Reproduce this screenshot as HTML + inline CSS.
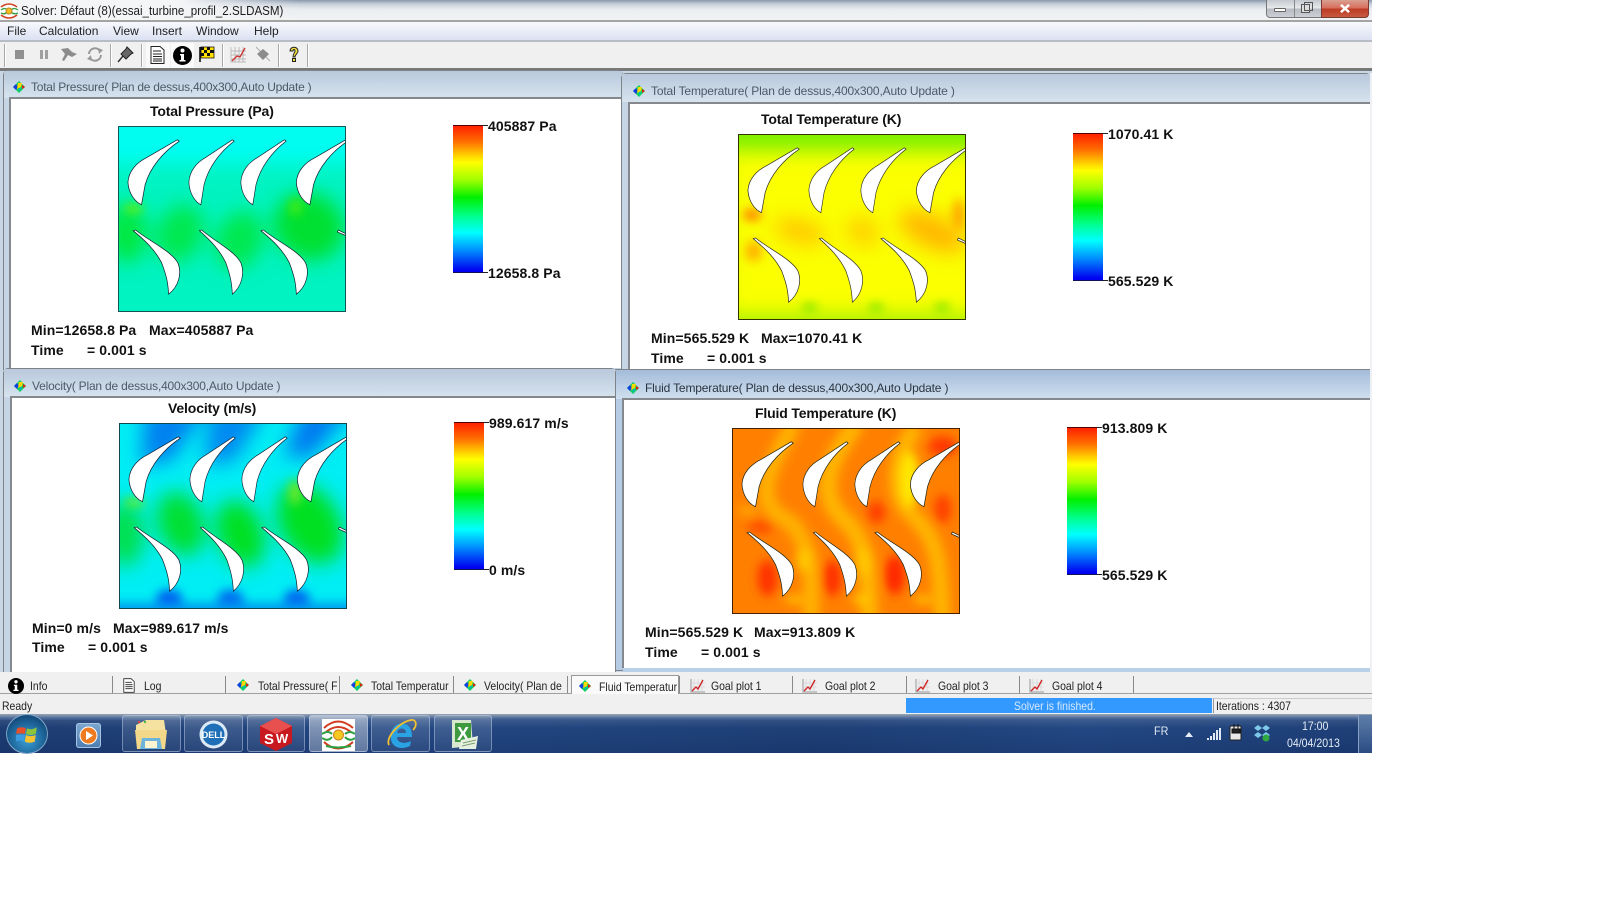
<!DOCTYPE html>
<html><head><meta charset="utf-8"><title>Solver</title>
<style>
html,body{margin:0;padding:0;background:#fff}
body{width:1598px;height:900px;position:relative;overflow:hidden;font-family:"Liberation Sans",sans-serif}
div,span,svg{position:absolute}
.t{white-space:nowrap;line-height:1;transform-origin:0 50%}
.pt{font-size:12px;color:#4c5a68;letter-spacing:-.15px}
.b{font-weight:bold;font-size:14px;color:#111;letter-spacing:.1px;white-space:nowrap;line-height:1}
.h{letter-spacing:-.15px}
.m{font-size:12px;color:#222;white-space:nowrap;line-height:1}
.tab{font-size:12px;color:#222;white-space:nowrap;line-height:1;transform:scaleX(.87);transform-origin:0 50%}
.title{background:linear-gradient(#b9c9db,#d6e3ef)}
.frame{background:#c6d5e6;border:1px solid #7e8388;border-radius:5px 5px 0 0;box-sizing:border-box}
.white{background:#fff;border-top:2px solid #85898e;border-left:2px solid #85898e;box-sizing:border-box}
.bar{width:30px;height:148px;background:linear-gradient(#ff2000 0,#ff7000 11%,#ffd000 20%,#ff0 25%,#a0ff00 37%,#00f000 49%,#00ff90 62%,#0ff 73%,#0090ff 85%,#0000f0 99%);border-top:1px solid #500;border-bottom:1px solid #115;box-sizing:border-box}
.tk{height:1px;width:5px;background:#222}
.tb{background:linear-gradient(rgba(255,255,255,.16),rgba(255,255,255,.06));border:1px solid rgba(200,215,240,.45);border-radius:3px;box-sizing:border-box;top:715px;height:37px}
.sep{width:1px;height:23px;top:44px;background:#a8a8a8;border-right:1px solid #fff}
.d{width:1px;background:#888;top:676px;height:17px}
</style></head><body>
<svg width="0" height="0" style="position:absolute"><defs>
<filter id="f1" filterUnits="userSpaceOnUse" x="-200" y="-200" width="1300" height="1100"><feGaussianBlur stdDeviation="30"/></filter>
<filter id="f2" filterUnits="userSpaceOnUse" x="-200" y="-200" width="1300" height="1100"><feGaussianBlur stdDeviation="15"/></filter>
<path id="u" d="M232,86 L238,90 C190,122 150,170 135,222 L124,283 C105,275 85,250 83,215 C85,180 110,155 140,140 Z"/>
<path id="l" d="M99,362 L106,360 C150,395 215,425 234,460 C246,490 238,530 206,555 C204,520 200,500 185,460 C165,420 135,392 99,362 Z"/>
<g id="bl">
<use href="#u"/><use href="#u" transform="translate(194,0) scale(.882,1)"/><use href="#u" transform="translate(351,0) scale(.882,1)"/><use href="#u" transform="translate(509,0)"/>
<use href="#l"/><use href="#l" transform="translate(207,0) scale(.93,1)"/><use href="#l" transform="translate(386,0)"/>
<path d="M719,360 L741,371 L741,377 L716,366Z"/>
</g>
<g id="ic"><path d="M6,0 L12,6 L6,12 L0,6Z" fill="#10d060"/><path d="M0,6 L3,3 L5,6 L3,9Z" fill="#1040e0"/><path d="M5,2 L9,2 L8,6 L4,8Z" fill="#ffd800"/><path d="M9,4 L12,6 L9,8Z" fill="#e02010"/><path d="M6,7 L8,7 L6,11Z" fill="#00b0d0"/></g>
<g id="gp"><path d="M1,1V14H15" fill="none" stroke="#999"/><path d="M4,1V14M8,1V14M12,1V14M1,5H15M1,9H15" stroke="#ccc" stroke-width=".6"/><path d="M2,13 L6,9 L8,11 L13,2" fill="none" stroke="#d02020" stroke-width="1.3"/></g>
</defs></svg>

<!-- window chrome -->
<div style="left:0;top:0;width:1372px;height:21px;background:linear-gradient(#8a98ac 0,#c6ced8 4px,#e9ecef 9px,#f1f2f4 19px)"></div>
<div style="left:0;top:0;width:300px;height:21px;background:linear-gradient(90deg,#f4f5f7 60%,rgba(240,242,245,0))"></div>
<div style="left:0;top:20px;width:1372px;height:2px;background:#a4a4a4"></div>
<div style="left:0;top:22px;width:1372px;height:18px;background:linear-gradient(#f8f9fd,#dbe1f2)"></div>
<div style="left:0;top:40px;width:1372px;height:2px;background:#b8bcc4"></div>
<div style="left:0;top:42px;width:1372px;height:26px;background:#f0f0f0"></div>
<div style="left:0;top:68px;width:1372px;height:3px;background:#787878"></div>
<div style="left:0;top:71px;width:1372px;height:604px;background:#c9d6e6"></div>

<!-- title bar icon + text -->
<svg style="left:0;top:2px" width="19" height="18" viewBox="0 0 19 18"><ellipse cx="9" cy="9" rx="9" ry="8" fill="#fff"/><path d="M1,5 Q9,-1 17,5M1,13 Q9,19 17,13" fill="none" stroke="#d04020" stroke-width="1.5"/><path d="M1,8 Q5,5 7,8M11,8 Q14,5 18,8M1,11 Q5,13 7,10M11,10 Q14,13 18,11" fill="none" stroke="#30a040" stroke-width="1.3"/><circle cx="9" cy="9" r="3" fill="#f2c020" stroke="#c08020"/></svg>
<div class="t" style="left:21px;top:4px;font-size:13px;color:#1c1c1c;transform:scaleX(.89)">Solver: Défaut (8)(essai_turbine_profil_2.SLDASM)</div>
<!-- window buttons -->
<div style="left:1266px;top:0;width:56px;height:18px;background:linear-gradient(#c4c8ce,#e6e8ea 45%,#b8bcc2 55%,#ccd0d6);border:1px solid #777;border-top:0;border-radius:0 0 0 4px;box-sizing:border-box"></div>
<div style="left:1294px;top:0;width:1px;height:17px;background:#888"></div>
<div style="left:1274px;top:8px;width:12px;height:4px;background:#fff;border:1px solid #666;box-sizing:border-box;border-radius:1px"></div>
<div style="left:1301px;top:4px;width:9px;height:9px;border:1px solid #555;background:#ddd;box-sizing:border-box"></div>
<div style="left:1304px;top:2px;width:9px;height:9px;border:1px solid #555;box-sizing:border-box"></div>
<div style="left:1321px;top:0;width:48px;height:18px;background:linear-gradient(#d8a090,#d87060 45%,#bc3c24 55%,#c85a42);border:1px solid #7a3a30;border-top:0;border-radius:0 0 4px 0;box-sizing:border-box"></div>
<svg style="left:1339px;top:4px" width="12" height="9" viewBox="0 0 14 11"><path d="M2,1 L12,10M12,1 L2,10" stroke="#fff" stroke-width="3"/></svg>

<!-- menu -->
<div class="m" style="left:7px;top:25px">File</div>
<div class="m" style="left:39px;top:25px">Calculation</div>
<div class="m" style="left:113px;top:25px">View</div>
<div class="m" style="left:152px;top:25px">Insert</div>
<div class="m" style="left:196px;top:25px">Window</div>
<div class="m" style="left:254px;top:25px">Help</div>

<!-- toolbar -->
<div class="sep" style="left:4px"></div>
<div style="left:15px;top:50px;width:9px;height:9px;background:#909090"></div>
<div style="left:40px;top:50px;width:3px;height:9px;background:#a0a0a0"></div><div style="left:45px;top:50px;width:3px;height:9px;background:#a0a0a0"></div>
<svg style="left:60px;top:46px" width="18" height="17" viewBox="0 0 18 17"><path d="M1,3 L8,2 L12,6 L17,8 L12,11 L8,9 L4,15 L2,14 L5,8Z" fill="#8c8c8c"/></svg>
<svg style="left:86px;top:46px" width="18" height="17" viewBox="0 0 18 17"><path d="M3,8 A6,6 0 0 1 14,5M15,9 A6,6 0 0 1 4,12" fill="none" stroke="#999" stroke-width="2"/><path d="M12,2 L17,4 L13,8ZM6,15 L1,13 L5,9Z" fill="#999"/></svg>
<div class="sep" style="left:110px"></div>
<svg style="left:117px;top:46px" width="17" height="17" viewBox="0 0 17 17"><path d="M1,16 L6,10" stroke="#333" stroke-width="1.5"/><path d="M4,8 L9,3 L10,1 L16,7 L14,8 L9,13Z" fill="#666" stroke="#222"/></svg>
<div class="sep" style="left:141px"></div>
<div style="left:146px;top:43px;width:24px;height:25px;background:#fafafa"></div>
<div style="left:171px;top:43px;width:23px;height:25px;background:#fafafa"></div>
<svg style="left:150px;top:46px" width="15" height="18" viewBox="0 0 15 18"><path d="M1,.5H10L14,4V17.5H1Z" fill="#fff" stroke="#222"/><path d="M3,5H11M3,8H12M3,10.500H12M3,13H12M3,15H12" stroke="#222"/></svg>
<svg style="left:173px;top:46px" width="19" height="19" viewBox="0 0 19 19"><circle cx="9.500" cy="9.500" r="9.500" fill="#000"/><circle cx="9.500" cy="4.500" r="2" fill="#fff"/><path d="M7,8H11V14H12.500V15.500H6.500V14H8V9.500H7Z" fill="#fff"/></svg>
<svg style="left:199px;top:46px" width="16" height="17" viewBox="0 0 16 17"><path d="M1,1V16" stroke="#000" stroke-width="1.500"/><rect x="2" y="1" width="13" height="11" fill="#ffe000" stroke="#000" stroke-width=".7"/><path d="M2,1H5V4H2ZM8,1H11V4H8ZM5,4H8V7H5ZM11,4H15V7H11ZM2,7H5V10H2ZM8,7H11V10H8Z" fill="#111"/></svg>
<div class="sep" style="left:222px"></div>
<svg style="left:230px;top:46px" width="17" height="17" viewBox="0 0 17 17"><path d="M1,1V16H16M5,1V16M9,1V16M13,1V16M1,5H16M1,9H16M1,13H16" stroke="#aaa" stroke-width=".7" fill="none"/><path d="M2,15 L7,10 L10,11 L15,2" fill="none" stroke="#d03030" stroke-width="1.300"/></svg>
<svg style="left:254px;top:46px" width="18" height="17" viewBox="0 0 18 17"><path d="M2,1 L16,15" stroke="#aaa"/><path d="M9,3 L15,8 L9,14 L3,8Z" fill="#8c8c8c"/></svg>
<div class="sep" style="left:278px"></div>
<svg style="left:287px;top:46px" width="14" height="17" viewBox="0 0 14 17"><path d="M3,5 C3,0 11,0 11,5 C11,8 8,8 8,11H6C6,7 8,7 8,5 C8,3 6,3 6,5Z" fill="#f6e040" stroke="#222"/><rect x="5.500" y="12.500" width="3" height="3" fill="#f6e040" stroke="#222"/></svg>
<div class="sep" style="left:307px"></div>

<!-- panel 1 -->
<div class="frame" style="left:3px;top:70px;width:620px;height:300px"></div>
<div class="title" style="left:4px;top:71px;width:618px;height:27px"></div>
<svg style="left:13px;top:81px" width="12" height="12"><use href="#ic"/></svg>
<div class="t pt" style="left:31px;top:81px;letter-spacing:-.24px">Total Pressure( Plan de dessus,400x300,Auto Update )</div>
<div class="white" style="left:9px;top:97px;width:613px;height:271px"></div>
<div class="b h" style="left:150px;top:104px">Total Pressure (Pa)</div>
<svg style="left:118px;top:126px;border:1px solid #155" width="226" height="184" viewBox="56 47 683 559" preserveAspectRatio="none">
<rect x="56" y="47" width="683" height="559" fill="#00f3c0"/>
<g filter="url(#f1)"><rect x="-100" y="-100" width="1000" height="260" fill="#00fdf0"/><ellipse cx="80" cy="370" rx="60" ry="90" fill="#00e840"/><ellipse cx="240" cy="370" rx="70" ry="90" fill="#00e850" transform="rotate(25 240 370)"/><ellipse cx="420" cy="390" rx="70" ry="90" fill="#00e850" transform="rotate(25 420 390)"/><ellipse cx="630" cy="350" rx="110" ry="100" fill="#00e030" transform="rotate(30 630 350)"/></g>
<g filter="url(#f2)"><ellipse cx="100" cy="295" rx="30" ry="12" fill="#70f000"/><ellipse cx="590" cy="290" rx="20" ry="25" fill="#40ec10"/></g>
<g fill="#fff" stroke="#123" stroke-width="2.200"><use href="#bl"/></g></svg>
<div class="bar" style="left:453px;top:125px"></div>
<div class="tk" style="left:483px;top:125px"></div><div class="tk" style="left:483px;top:272px"></div>
<div class="b" style="left:488px;top:119px">405887 Pa</div>
<div class="b" style="left:488px;top:266px">12658.8 Pa</div>
<div class="b" style="left:31px;top:323px">Min=12658.8 Pa</div><div class="b" style="left:149px;top:323px">Max=405887 Pa</div>
<div class="b" style="left:31px;top:343px">Time</div><div class="b" style="left:87px;top:343px">= 0.001 s</div>

<!-- panel 2 -->
<div class="frame" style="left:621px;top:73px;width:750px;height:297px"></div>
<div class="title" style="left:622px;top:74px;width:748px;height:28px"></div>
<svg style="left:633px;top:85px" width="12" height="12"><use href="#ic"/></svg>
<div class="t pt" style="left:651px;top:85px">Total Temperature( Plan de dessus,400x300,Auto Update )</div>
<div class="white" style="left:628px;top:102px;width:742px;height:267px"></div>
<div class="b h" style="left:761px;top:112px">Total Temperature (K)</div>
<svg style="left:738px;top:134px;border:1px solid #330" width="226" height="184" viewBox="56 47 683 559" preserveAspectRatio="none">
<rect x="56" y="47" width="683" height="559" fill="#fbff00"/>
<g filter="url(#f1)"><rect x="-100" y="-100" width="1000" height="195" fill="#7cf000"/><ellipse cx="240" cy="340" rx="80" ry="34" fill="#ffc400" transform="rotate(15 240 340)"/><ellipse cx="430" cy="340" rx="50" ry="40" fill="#ffcc00" transform="rotate(25 430 340)"/><ellipse cx="640" cy="340" rx="110" ry="50" fill="#ffb800" transform="rotate(25 640 340)"/><rect x="-100" y="590" width="1000" height="100" fill="#a4f000"/><rect x="-100" y="90" width="120" height="600" fill="#b0f400"/></g>
<g filter="url(#f2)"><ellipse cx="95" cy="290" rx="28" ry="18" fill="#ff8000"/><ellipse cx="720" cy="290" rx="20" ry="50" fill="#ffa800"/><ellipse cx="270" cy="570" rx="24" ry="10" fill="#60e000"/><ellipse cx="470" cy="570" rx="24" ry="10" fill="#60e000"/><ellipse cx="670" cy="570" rx="24" ry="10" fill="#60e000"/><ellipse cx="100" cy="400" rx="26" ry="32" fill="#ffb400"/></g>
<g fill="#fff" stroke="#332" stroke-width="2.200"><use href="#bl"/></g></svg>
<div class="bar" style="left:1073px;top:133px"></div>
<div class="tk" style="left:1103px;top:133px"></div><div class="tk" style="left:1103px;top:280px"></div>
<div class="b" style="left:1108px;top:127px">1070.41 K</div>
<div class="b" style="left:1108px;top:274px">565.529 K</div>
<div class="b" style="left:651px;top:331px">Min=565.529 K</div><div class="b" style="left:761px;top:331px">Max=1070.41 K</div>
<div class="b" style="left:651px;top:351px">Time</div><div class="b" style="left:707px;top:351px">= 0.001 s</div>

<!-- panel 3 -->
<div class="frame" style="left:3px;top:368px;width:613px;height:306px"></div>
<div class="title" style="left:4px;top:369px;width:611px;height:28px"></div>
<svg style="left:14px;top:380px" width="12" height="12"><use href="#ic"/></svg>
<div class="t pt" style="left:32px;top:380px;letter-spacing:-.2px">Velocity( Plan de dessus,400x300,Auto Update )</div>
<div class="white" style="left:10px;top:396px;width:605px;height:277px"></div>
<div class="b h" style="left:168px;top:401px">Velocity (m/s)</div>
<svg style="left:119px;top:423px;border:1px solid #145" width="226" height="184" viewBox="56 47 683 559" preserveAspectRatio="none">
<rect x="56" y="47" width="683" height="559" fill="#00eef4"/>
<g filter="url(#f1)"><path d="M130,0 L320,0 L210,160 L120,170Z" fill="#0080f0"/><path d="M330,0 L500,0 L400,160 L310,170Z" fill="#0088f0"/><path d="M610,0 L760,0 L630,150 L550,140Z" fill="#0078f0"/><ellipse cx="70" cy="380" rx="60" ry="100" fill="#00e050"/><ellipse cx="240" cy="350" rx="70" ry="100" fill="#00e030" transform="rotate(-20 240 350)"/><ellipse cx="420" cy="380" rx="70" ry="105" fill="#00e020" transform="rotate(-20 420 380)"/><ellipse cx="630" cy="350" rx="90" ry="130" fill="#00e020" transform="rotate(-30 630 350)"/></g>
<g filter="url(#f2)"><ellipse cx="100" cy="285" rx="30" ry="12" fill="#70ee10"/><ellipse cx="585" cy="255" rx="18" ry="38" fill="#70e820"/><ellipse cx="205" cy="580" rx="40" ry="30" fill="#0058f0"/><ellipse cx="390" cy="580" rx="40" ry="30" fill="#0068f0"/><ellipse cx="590" cy="580" rx="40" ry="30" fill="#0060f0"/><rect x="0" y="590" width="800" height="40" fill="#0098f0"/></g>
<g fill="#fff" stroke="#123" stroke-width="2.200"><use href="#bl"/></g></svg>
<div class="bar" style="left:454px;top:422px"></div>
<div class="tk" style="left:484px;top:422px"></div><div class="tk" style="left:484px;top:569px"></div>
<div class="b" style="left:489px;top:416px">989.617 m/s</div>
<div class="b" style="left:489px;top:563px">0 m/s</div>
<div class="b" style="left:32px;top:621px">Min=0 m/s</div><div class="b" style="left:113px;top:621px">Max=989.617 m/s</div>
<div class="b" style="left:32px;top:640px">Time</div><div class="b" style="left:88px;top:640px">= 0.001 s</div>

<!-- panel 4 -->
<div class="frame" style="left:615px;top:369px;width:756px;height:302px;background:#b6cce4"></div>
<div style="left:616px;top:370px;width:754px;height:29px;background:linear-gradient(#a4bcda,#cfdfef)"></div>
<svg style="left:627px;top:382px" width="12" height="12"><use href="#ic"/></svg>
<div class="t pt" style="left:645px;top:382px;color:#2c3540;letter-spacing:-.17px">Fluid Temperature( Plan de dessus,400x300,Auto Update )</div>
<div class="white" style="left:622px;top:398px;width:748px;height:270px"></div>
<div class="b h" style="left:755px;top:406px">Fluid Temperature (K)</div>
<svg style="left:732px;top:428px;border:1px solid #420" width="226" height="184" viewBox="56 47 683 559" preserveAspectRatio="none">
<rect x="56" y="47" width="683" height="559" fill="#ff8000"/>
<g filter="url(#f2)"><path d="M240,30 C170,160 100,270 230,330 C290,400 300,480 290,640" fill="none" stroke="#ffb000" stroke-width="50"/><path d="M430,30 C340,150 300,250 410,340 C470,420 460,500 470,640" fill="none" stroke="#ffb400" stroke-width="54"/><path d="M610,40 C540,130 530,250 600,310 C680,390 680,450 690,640" fill="none" stroke="#ffb400" stroke-width="50"/><ellipse cx="590" cy="200" rx="30" ry="85" fill="#ffe800"/><ellipse cx="100" cy="295" rx="30" ry="10" fill="#ffb800"/><ellipse cx="270" cy="445" rx="24" ry="36" fill="#ffc800"/><ellipse cx="450" cy="450" rx="24" ry="44" fill="#ffc800"/><ellipse cx="240" cy="565" rx="26" ry="10" fill="#ffd800"/><ellipse cx="440" cy="565" rx="26" ry="10" fill="#ffd800"/><ellipse cx="630" cy="565" rx="26" ry="10" fill="#ffd800"/><ellipse cx="160" cy="500" rx="30" ry="55" fill="#ff3000"/><ellipse cx="355" cy="500" rx="30" ry="55" fill="#ff3000"/><ellipse cx="545" cy="490" rx="30" ry="60" fill="#ff2800"/><ellipse cx="690" cy="100" rx="44" ry="30" fill="#ff3800"/><ellipse cx="490" cy="300" rx="28" ry="34" fill="#ff4000"/><ellipse cx="690" cy="290" rx="26" ry="44" fill="#ff4000"/><ellipse cx="140" cy="345" rx="40" ry="18" fill="#ff4800"/></g>
<g fill="#fff" stroke="#221" stroke-width="2.200"><use href="#bl"/></g></svg>
<div class="bar" style="left:1067px;top:427px"></div>
<div class="tk" style="left:1097px;top:427px"></div><div class="tk" style="left:1097px;top:574px"></div>
<div class="b" style="left:1102px;top:421px">913.809 K</div>
<div class="b" style="left:1102px;top:568px">565.529 K</div>
<div class="b" style="left:645px;top:625px">Min=565.529 K</div><div class="b" style="left:754px;top:625px">Max=913.809 K</div>
<div class="b" style="left:645px;top:645px">Time</div><div class="b" style="left:701px;top:645px">= 0.001 s</div>
<div style="left:623px;top:668px;width:747px;height:4px;background:#b8d0e8"></div>
<div style="left:1370px;top:73px;width:2px;height:600px;background:#eef0f4"></div>

<!-- tabs -->
<div style="left:0;top:672px;width:1372px;height:21px;background:#f0f0f0;border-bottom:1px solid #a0a0a0;box-sizing:content-box"></div>
<div style="left:571px;top:675px;width:108px;height:19px;background:#fafafa;border:1px solid #999;border-bottom:0;box-sizing:border-box"></div>
<div class="d" style="left:112px"></div><div class="d" style="left:225px"></div><div class="d" style="left:339px"></div><div class="d" style="left:453px"></div><div class="d" style="left:567px"></div><div class="d" style="left:679px"></div><div class="d" style="left:792px"></div><div class="d" style="left:906px"></div><div class="d" style="left:1019px"></div><div class="d" style="left:1133px"></div>
<svg style="left:8px;top:678px" width="16" height="16" viewBox="0 0 19 19"><circle cx="9.500" cy="9.500" r="9.500" fill="#000"/><circle cx="9.500" cy="4.500" r="2" fill="#fff"/><path d="M7,8H11V14H12.500V15.500H6.500V14H8V9.500H7Z" fill="#fff"/></svg>
<svg style="left:123px;top:678px" width="12" height="15" viewBox="0 0 15 18"><path d="M1,.5H10L14,4V17.500H1Z" fill="#fff" stroke="#222"/><path d="M3,5H11M3,8H12M3,10.500H12M3,13H12" stroke="#222"/></svg>
<div class="tab" style="left:30px;top:680px">Info</div>
<div class="tab" style="left:144px;top:680px">Log</div>
<svg style="left:237px;top:679px" width="12" height="12"><use href="#ic"/></svg><div class="tab" style="left:258px;top:680px">Total Pressure( F</div>
<svg style="left:351px;top:679px" width="12" height="12"><use href="#ic"/></svg><div class="tab" style="left:371px;top:680px">Total Temperatur</div>
<svg style="left:464px;top:679px" width="12" height="12"><use href="#ic"/></svg><div class="tab" style="left:484px;top:680px">Velocity( Plan de</div>
<svg style="left:579px;top:680px" width="12" height="12"><use href="#ic"/></svg><div class="tab" style="left:599px;top:681px">Fluid Temperatur</div>
<svg style="left:690px;top:678px" width="16" height="15"><use href="#gp"/></svg><div class="tab" style="left:711px;top:680px">Goal plot 1</div>
<svg style="left:802px;top:678px" width="16" height="15"><use href="#gp"/></svg><div class="tab" style="left:825px;top:680px">Goal plot 2</div>
<svg style="left:915px;top:678px" width="16" height="15"><use href="#gp"/></svg><div class="tab" style="left:938px;top:680px">Goal plot 3</div>
<svg style="left:1029px;top:678px" width="16" height="15"><use href="#gp"/></svg><div class="tab" style="left:1052px;top:680px">Goal plot 4</div>

<!-- status -->
<div style="left:0;top:694px;width:1372px;height:21px;background:#f0f0f0"></div>
<div class="tab" style="left:2px;top:700px">Ready</div>
<div style="left:906px;top:698px;width:306px;height:15px;background:#3399ff"></div>
<div class="tab" style="left:1014px;top:700px;color:#d6e8fb">Solver is finished.</div>
<div style="left:1213px;top:698px;width:159px;height:15px;border-left:1px solid #999;border-top:1px solid #ccc;box-sizing:border-box"></div>
<div class="tab" style="left:1216px;top:700px">Iterations : 4307</div>

<!-- taskbar -->
<div style="left:0;top:714px;width:1372px;height:39px;background:linear-gradient(#9aa6b6 0,#3f5f92 5px,#214682 14px,#1b3c76 100%)"></div>
<div style="left:0;top:720px;width:1358px;height:33px;background:linear-gradient(90deg,rgba(20,40,80,.3),rgba(60,90,140,.08) 30%,rgba(20,40,80,.22) 60%,rgba(60,90,140,.08) 80%,rgba(20,40,80,.2))"></div>
<div style="left:6px;top:714px;width:42px;height:40px;border-radius:50%;background:radial-gradient(circle at 50% 65%,#3aa0d8,#1a5c90 60%,#0c2f58);border:1px solid #7fa6c8;box-sizing:border-box"></div>
<svg style="left:16px;top:724px" width="22" height="22" viewBox="0 0 20 20"><path d="M1,4 Q5,2 9,4 L8,9 Q4,8 0,9Z" fill="#e8502c"/><path d="M10,4 Q14,6 19,3 L18,9 Q13,11 9,9Z" fill="#8cc43c"/><path d="M0,10 Q4,9 8,10 L7,16 Q3,14 0,16Z" fill="#3c9ce0"/><path d="M9,10 Q13,12 18,10 L17,16 Q12,18 8,16Z" fill="#f4c430"/></svg>
<div style="left:76px;top:723px;width:25px;height:25px;border-radius:3px;background:linear-gradient(#7ea8d0,#4c7cb0);box-shadow:inset 0 0 0 1px #a4c4e4"></div>
<svg style="left:79px;top:725px" width="19" height="21" viewBox="0 0 19 21"><circle cx="9.500" cy="10.500" r="8.500" fill="#ee7b20" stroke="#fff" stroke-width="1"/><path d="M7,6 L14,10.500 L7,15Z" fill="#fff"/></svg>
<div class="tb" style="left:122px;width:59px"></div>
<div class="tb" style="left:184px;width:59px"></div>
<div class="tb" style="left:247px;width:58px"></div>
<div class="tb" style="left:309px;width:59px;background:linear-gradient(rgba(255,255,255,.48),rgba(255,255,255,.3))"></div>
<div class="tb" style="left:371px;width:59px"></div>
<div class="tb" style="left:434px;width:58px"></div>
<svg style="left:134px;top:718px" width="34" height="32" viewBox="0 0 34 32"><path d="M2,7 L12,2 H30 L32,16 H2Z" fill="#f6e2a0"/><rect x="4" y="3" width="2" height="2" fill="#d44"/><rect x="10" y="3" width="2" height="2" fill="#4b4"/><path d="M1,12 H33 L31,31 H3Z" fill="#f2d888"/><path d="M8,20 H26 L28,31 H6Z" fill="#6cb4dc"/><rect x="11" y="23" width="12" height="7" fill="#fff4d0"/></svg>
<svg style="left:199px;top:720px" width="29" height="29" viewBox="0 0 29 29"><circle cx="14.500" cy="14.500" r="14" fill="#dceaf6"/><circle cx="14.500" cy="14.500" r="11" fill="#1f6fb8"/><text x="14.500" y="18" font-size="9" font-weight="bold" text-anchor="middle" fill="#fff" font-family="Liberation Sans">DELL</text></svg>
<svg style="left:259px;top:717px" width="34" height="34" viewBox="0 0 34 34"><path d="M17,1 L33,9 V26 L17,34 L1,26 V9Z" fill="#c81820"/><path d="M17,1 L33,9 L17,17 L1,9Z" fill="#e85050"/><text x="10" y="27" font-size="15" font-weight="bold" text-anchor="middle" fill="#fff" font-family="Liberation Sans">S</text><text x="23" y="26" font-size="13" font-weight="bold" text-anchor="middle" fill="#fff" font-family="Liberation Sans">W</text></svg>
<svg style="left:322px;top:719px" width="33" height="32" viewBox="0 0 33 32"><rect width="33" height="32" fill="#fff"/><path d="M2,9 Q16,-4 31,9M4,13 Q16,3 29,13M2,23 Q16,36 31,23" fill="none" stroke="#d23c20" stroke-width="2"/><path d="M0,15 Q6,11 10,15M23,15 Q28,11 33,15M0,19 Q6,23 10,18M23,18 Q28,23 33,19M4,27 Q16,30 29,27" fill="none" stroke="#2ca040" stroke-width="2"/><circle cx="16.500" cy="16" r="5" fill="#f4c820" stroke="#d08020"/></svg>
<svg style="left:385px;top:718px" width="34" height="33" viewBox="0 0 34 33"><path d="M6,18 C6,8 14,4 20,6 C26,8 27,14 27,19 H12 C12,24 18,27 26,23 L25,28 C14,33 5,28 6,18ZM12,15 H21 C21,9 13,9 12,15Z" fill="#29a3e4"/><path d="M4,27 C0,20 14,4 26,2 C32,1 32,8 28,12" fill="none" stroke="#f2c030" stroke-width="1.800"/></svg>
<svg style="left:447px;top:718px" width="32" height="33" viewBox="0 0 32 33"><path d="M5,2 H24 L26,28 L5,30Z" fill="#d8e8d0"/><path d="M8,5 H24 V24 H8Z" fill="#3f9a3f"/><text x="16" y="22" font-size="18" font-weight="bold" text-anchor="middle" fill="#fff" font-family="Liberation Sans">X</text><path d="M14,22 L31,18 L29,31 L12,31Z" fill="#e6f0e0"/><path d="M16,25 L29,22M15,28 L28,25" stroke="#7aa070"/></svg>
<div class="t" style="left:1154px;top:725px;font-size:12px;color:#dfe8f4;transform:scaleX(.9)">FR</div>
<svg style="left:1185px;top:732px" width="8" height="5"><path d="M0,5 L4,0 L8,5Z" fill="#e6eef8"/></svg>
<svg style="left:1206px;top:727px" width="15" height="14"><path d="M1,11H3V13H1ZM4,9H6V13H4ZM7,6H9V13H7ZM10,3H12V13H10ZM13,1H15V13H13Z" fill="#dfe8f4"/></svg>
<svg style="left:1229px;top:723px" width="15" height="18" viewBox="0 0 15 18"><rect x="1" y="3" width="11" height="14" rx="1" fill="#e8e8ea" stroke="#222"/><path d="M5,1 V6M9,1 V6M3,6 H11 V10 H3Z" stroke="#111" fill="#222"/></svg>
<svg style="left:1254px;top:724px" width="17" height="18" viewBox="0 0 17 18"><path d="M4,1 L8,4 L4,7 L0,4ZM12,1 L16,4 L12,7 L8,4ZM4,8 L8,11 L4,14 L0,11ZM12,8 L16,11 L12,14 L8,11Z" fill="#7ec8ea"/><circle cx="12" cy="14" r="3.500" fill="#30a840"/></svg>
<div class="t" style="left:1302px;top:720px;font-size:12px;color:#e4ecf6;transform:scaleX(.88)">17:00</div>
<div class="t" style="left:1287px;top:737px;font-size:12px;color:#e4ecf6;transform:scaleX(.88)">04/04/2013</div>
<div style="left:1358px;top:715px;width:14px;height:38px;background:linear-gradient(#5f7ea8,#2a4c84);border-left:1px solid #8aa0c0;box-sizing:border-box"></div>
</body></html>
